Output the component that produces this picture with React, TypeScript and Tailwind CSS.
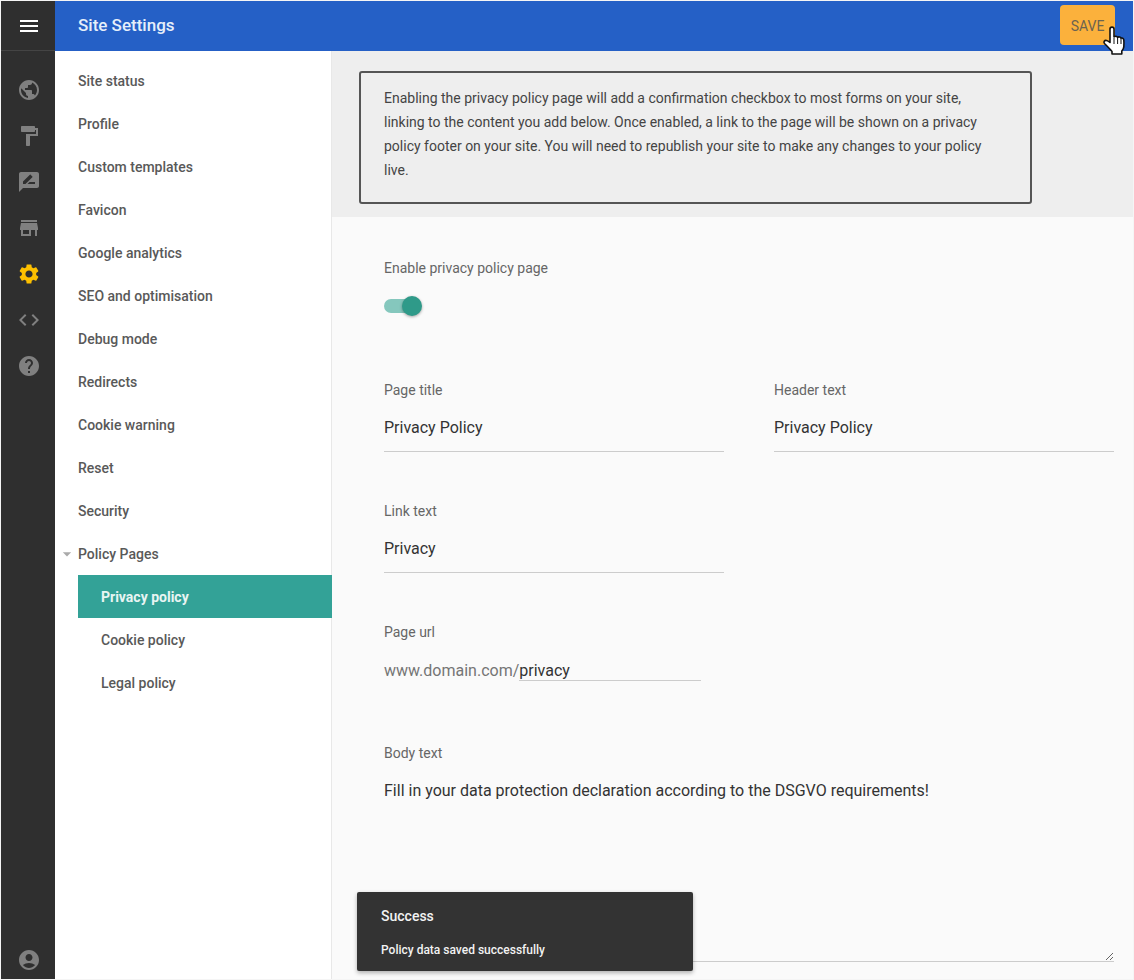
import React from "react";
import { MdMenu, MdPublic, MdFormatPaint, MdRateReview, MdStore, MdSettings, MdCode, MdHelp, MdAccountCircle, MdArrowDropDown } from "react-icons/md";

const nav = ["Site status","Profile","Custom templates","Favicon","Google analytics","SEO and optimisation","Debug mode","Redirects","Cookie warning","Reset","Security"];

function Field({ label, value, className = "" }: { label: string; value: string; className?: string }) {
  return (
    <div className={"flex flex-col " + className}>
      <label className="text-[14px] leading-[20px] text-[#666]">{label}</label>
      <input readOnly value={value} className="mt-[8px] h-[44px] border-b border-[#ccc] bg-transparent pb-[5px] text-[16px] text-[#333] outline-none" />
    </div>
  );
}

export default function App() {
  return (
    <div className="relative flex h-[980px] w-[1134px] flex-col overflow-hidden bg-[#f5f5f5] px-px pt-px pb-px font-['Roboto',sans-serif]">
      <header className="flex h-[50px] shrink-0">
        <div className="flex w-[54px] items-center justify-center border-b border-[#444] bg-[#2f2f2f] pl-[2px] text-white">
          <MdMenu size={24} />
        </div>
        <div className="flex flex-1 items-center justify-between bg-[#2560c6] pl-[23px] pr-[18px]">
          <h1 className="text-[17px] font-medium text-[#e6effa]">Site Settings</h1>
          <button className="mt-[-2px] h-[40px] w-[55px] rounded-[4px] bg-[#fbb13c] pt-[2px] text-[14px] text-[#6b6350]">SAVE</button>
        </div>
      </header>
      <div className="flex min-h-0 flex-1">
        <aside className="flex w-[54px] shrink-0 flex-col items-center justify-between bg-[#2f2f2f] pt-[27px] pb-[7px] pl-[2px] text-[#808080]">
          <div className="flex flex-col items-center gap-[22px]">
            <MdPublic size={24} />
            <MdFormatPaint size={24} />
            <MdRateReview size={24} />
            <MdStore size={24} />
            <MdSettings size={24} className="text-[#fdc000]" />
            <MdCode size={24} />
            <MdHelp size={24} />
          </div>
          <MdAccountCircle size={24} />
        </aside>
        <nav className="w-[277px] shrink-0 border-r border-[#e8e8e8] bg-white pt-[8px] text-[14px] font-medium text-[#595959]">
          {nav.map((n) => (
            <div key={n} className="flex h-[43px] items-center pl-[23px] pt-[2px]">{n}</div>
          ))}
          <div className="relative flex h-[43px] items-center pl-[23px] pt-[2px]">
            <MdArrowDropDown size={20} className="absolute left-[2px] top-[12px] text-[#aaa]" />
            Policy Pages
          </div>
          <div className="relative -mr-px ml-[23px] flex h-[43px] items-center bg-[#33a297] pl-[23px] pt-[2px] font-bold text-[#e8f5f3]">Privacy policy</div>
          <div className="ml-[23px] flex h-[43px] items-center pl-[23px] pt-[2px]">Cookie policy</div>
          <div className="ml-[23px] flex h-[43px] items-center pl-[23px] pt-[2px]">Legal policy</div>
        </nav>
        <main className="flex min-w-0 flex-1 flex-col bg-[#fafafa]">
          <section className="h-[166px] shrink-0 bg-[#eeeeee] pt-[20px] pl-[27px]">
            <div className="h-[133px] w-[673px] rounded-[3px] border-2 border-[#555] py-[13px] pl-[23px] pr-[40px] text-[14px] leading-[24px] text-[#444]">
              Enabling the privacy policy page will add a confirmation checkbox to most forms on your site, linking to the content you add below. Once enabled, a link to the page will be shown on a privacy policy footer on your site. You will need to republish your site to make any changes to your policy live.
            </div>
          </section>
          <section className="flex flex-1 flex-col pl-[52px] pr-[19px] pt-[41px]">
            <div className="text-[14px] leading-[20px] text-[#666]">Enable privacy policy page</div>
            <div className="relative mt-[18px] h-[20px] w-[38px]">
              <div className="absolute left-0 top-[3px] h-[14px] w-[36px] rounded-full bg-[#85c7bd]" />
              <div className="absolute left-[18px] top-0 h-[20px] w-[20px] rounded-full bg-[#2f9a89] shadow-[0_1px_3px_rgba(0,0,0,0.35)]" />
            </div>
            <div className="mt-[64px] flex gap-[50px]">
              <Field label="Page title" value="Privacy Policy" className="w-[340px]" />
              <Field label="Header text" value="Privacy Policy" className="w-[340px]" />
            </div>
            <Field label="Link text" value="Privacy" className="mt-[49px] w-[340px]" />
            <div className="mt-[49px] text-[14px] leading-[20px] text-[#666]">Page url</div>
            <div className="mt-[18px] flex h-[35px] items-start text-[16px] leading-[22px]">
              <span className="text-[#757575]">www.domain.com/</span>
              <input readOnly value="privacy" className="h-[21px] w-[182px] border-b border-[#ccc] bg-transparent leading-[20px] text-[#333] outline-none" />
            </div>
            <div className="mt-[48px] text-[14px] leading-[20px] text-[#666]">Body text</div>
            <textarea readOnly value="Fill in your data protection declaration according to the DSGVO requirements!" className="mt-[17px] h-[182px] w-full border-b border-[#ccc] bg-transparent text-[16px] leading-[22px] text-[#333] outline-none" />
          </section>
        </main>
      </div>
      <div className="absolute left-[357px] top-[892px] h-[79px] w-[336px] rounded-[2px] bg-[#333] px-[24px] pt-[15px] shadow-[0_2px_4px_rgba(0,0,0,0.3)]">
        <div className="text-[14px] font-medium leading-[18px] text-[#f2f2f2]">Success</div>
        <div className="mt-[16px] text-[12px] font-medium leading-[18px] text-[#f2f2f2]">Policy data saved successfully</div>
      </div>
      <svg className="absolute left-[1102px] top-[26px]" width="24" height="30" viewBox="0 0 24 30">
        <path d="M8 3c0-2.5 4-2.5 4 0V11c1-1 3-1 3.6.4c1-.9 3-.6 3.4.8c1-.5 2.6 0 2.8 1.6c.2 2 .2 5 0 7c-.2 1.6-1 3-2 4.2V28H10V25.5C8 23 5 20 2.5 17.5c-1.3-1.5 0-3.5 2-3c1.2.3 2.5 1.2 3.5 2Z" fill="#fff" stroke="#111" strokeWidth="1.6" strokeLinejoin="round" />
        <path d="M12 12v6M15.6 12v6M19 13v5" stroke="#111" strokeWidth="1" />
      </svg>
    </div>
  );
}
